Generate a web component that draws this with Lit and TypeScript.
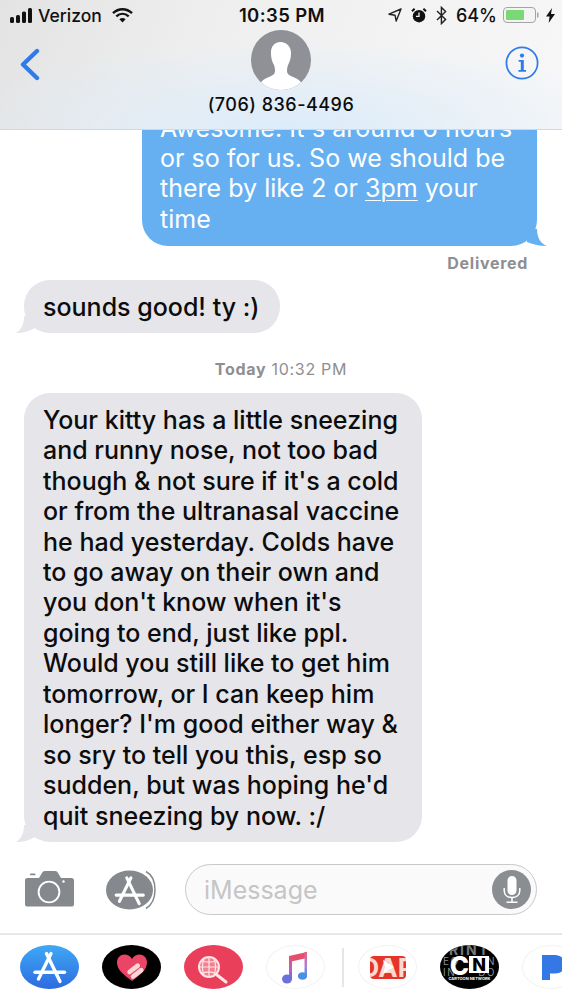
import { html, css, LitElement, svg } from "lit";
import { customElement } from "lit/decorators.js";

const INCOMING = [
  "Your kitty has a little sneezing",
  "and runny nose, not too bad",
  "though & not sure if it's a cold",
  "or from the ultranasal vaccine",
  "he had yesterday. Colds have",
  "to go away on their own and",
  "you don't know when it's",
  "going to end, just like ppl.",
  "Would you still like to get him",
  "tomorrow, or I can keep him",
  "longer? I'm good either way &",
  "so sry to tell you this, esp so",
  "sudden, but was hoping he'd",
  "quit sneezing by now. :/",
];

// drawn on a 59x44 box, the size of the drawer ovals
const storeGlyph = svg`
  <g fill="none" stroke="#fff" stroke-width="3.4" stroke-linecap="round">
    <path d="M31 8.5 L18.5 34" />
    <path d="M26.5 8.5 L40 36.5" />
    <path d="M15 27.3 H44.5" />
  </g>`;

const inTail = html`
  <svg class="tail" width="19" height="17" viewBox="0 0 19 17" fill="#e5e5ea">
    <path d="M8 0 C8 8 6 13 0 17 C7 17 14 15 19 12 V0 Z" />
  </svg>
`;

@customElement("app-root")
export class AppRoot extends LitElement {
  static styles = css`
    :host {
      display: block;
      width: 562px;
      height: 1000px;
      background: #fff;
      font-family: Inter, "Liberation Sans", sans-serif;
      color: #0c0c0c;
      overflow: hidden;
    }
    .page {
      display: flex;
      flex-direction: column;
      height: 1000px;
    }
    svg {
      display: block;
      flex: none;
    }

    header {
      flex: none;
      height: 129px;
      border-bottom: 1px solid #d6d6d8;
      background:
        radial-gradient(ellipse 340px 90px at 52% 100%, #dcecfa 0%, rgba(224, 238, 250, 0) 100%),
        linear-gradient(110deg, #e3e3e3 0%, #efefef 38%, #f7f7f8 100%);
    }
    .status {
      height: 30px;
      display: grid;
      grid-template-columns: 1fr auto 1fr;
      align-items: center;
      font-size: 17.5px;
      font-weight: 500;
      color: #111;
    }
    .status-left {
      display: flex;
      align-items: center;
      padding-left: 10px;
      gap: 5px;
    }
    .status-left svg.wifi {
      margin-left: 5px;
    }
    .time {
      font-weight: 600;
      font-size: 18.5px;
      letter-spacing: 0.4px;
      padding-left: 2px;
    }
    .status-right {
      display: flex;
      align-items: center;
      justify-content: flex-end;
      padding-right: 7px;
      gap: 9px;
    }
    .percent {
      font-size: 18px;
    }
    .battery {
      margin: 0 -2px 0 -3px;
    }
    .nav {
      display: grid;
      grid-template-columns: 1fr auto 1fr;
      align-items: start;
    }
    .back {
      padding: 18px 0 0 20px;
    }
    .info {
      justify-self: end;
      padding: 16px 23px 0 0;
    }
    .contact {
      display: flex;
      flex-direction: column;
      align-items: center;
    }
    .number {
      margin-top: 5px;
      font-size: 18px;
      line-height: 20px;
      font-weight: 500;
      letter-spacing: 0.5px;
    }

    .thread {
      flex: 1;
      min-height: 0;
      overflow: hidden;
      display: flex;
      flex-direction: column;
      align-items: flex-start;
    }
    .bubble {
      position: relative;
      font-size: 25px;
      line-height: 30.46px;
      box-sizing: border-box;
    }
    .out {
      align-self: flex-end;
      margin: -27.5px 25px 0 0;
      width: 395px;
      padding: 10px 18px 11.5px;
      border-radius: 26px;
      background: #66b0f1;
      color: #fff;
      letter-spacing: 0.02px;
    }
    .out u {
      text-decoration-thickness: 1px;
      text-underline-offset: 3px;
    }
    .in {
      margin-left: 24px;
      padding: 12px 23px 11px 19px;
      border-radius: 26px;
      background: #e5e5ea;
      font-weight: 500;
    }
    .tail {
      position: absolute;
      bottom: 0;
    }
    .out .tail {
      right: -10px;
    }
    .in .tail {
      left: -8px;
    }
    .delivered {
      align-self: flex-end;
      margin: 7px 34px 0 0;
      font-size: 16px;
      line-height: 20px;
      font-weight: 700;
      letter-spacing: 0.7px;
      color: #8e8e93;
    }
    .first {
      margin-top: 7.5px;
      padding: 12px 20px 10px 19px;
    }
    .stamp {
      align-self: center;
      margin: 26px 0 14px;
      font-size: 16px;
      line-height: 20px;
      letter-spacing: 0.7px;
      color: #8e8e93;
    }
    .stamp b {
      font-weight: 700;
    }

    .composer {
      flex: none;
      height: 78px;
      box-sizing: border-box;
      padding: 9px 25px 18px;
      display: flex;
      align-items: center;
    }
    .camera {
      margin-right: 32px;
    }
    .store-btn {
      margin-right: 27px;
    }
    .field {
      flex: 1;
      height: 51px;
      box-sizing: border-box;
      border: 1.5px solid #c9c9cb;
      border-radius: 26px;
      background: #fafafa;
      display: flex;
      align-items: center;
      justify-content: space-between;
      padding: 0 5px 0 18px;
      font-size: 25px;
      color: #c5c5c7;
    }
    .mic {
      width: 39px;
      height: 39px;
      border-radius: 50%;
      background: #8a8d91;
      display: flex;
      align-items: center;
      justify-content: center;
    }

    .drawer {
      flex: none;
      height: 67px;
      box-sizing: border-box;
      border-top: 2px solid #e8e8e8;
      padding: 10px 0 0 20px;
      display: flex;
      align-items: flex-start;
      gap: 23px;
      overflow: hidden;
    }
    .oval {
      position: relative;
      flex: none;
      width: 59px;
      height: 44px;
      border-radius: 50%;
      display: flex;
      align-items: center;
      justify-content: center;
      overflow: hidden;
    }
    .store {
      background: linear-gradient(#3fa9f5, #2c6be0);
    }
    .black {
      background: #000;
    }
    .red {
      background: #ea3f5b;
    }
    .plain {
      box-shadow: inset 0 0 0 1px #f2f2f2;
      background: #fff;
    }
    .divider {
      flex: none;
      width: 2px;
      height: 39px;
      margin: 3px -9px 0 -6px;
      background: #e6e6e6;
    }
    .dap {
      width: 36px;
      height: 23px;
      border-radius: 4px;
      background: #e5352b;
      color: #fbd9cf;
      font-size: 26px;
      line-height: 23px;
      font-weight: 700;
      display: flex;
      justify-content: center;
      overflow: hidden;
      white-space: nowrap;
    }
    .play {
      position: absolute;
    }
    .cn-rows {
      position: absolute;
      inset: 0;
      display: flex;
      flex-direction: column;
      color: #8f8f8f;
      white-space: nowrap;
    }
    .cn-top {
      height: 11px;
      font-size: 14px;
      line-height: 10px;
      font-weight: 700;
      letter-spacing: 2px;
      text-align: center;
      color: #777;
      overflow: hidden;
    }
    .cn-row {
      display: flex;
      justify-content: space-between;
      padding: 0 3px;
      height: 11px;
      font-size: 10px;
      line-height: 11px;
      letter-spacing: 1.5px;
    }
    .cn-logo {
      position: relative;
      display: flex;
      align-items: flex-start;
      margin-top: -3px;
      font-weight: 800;
    }
    .cn-c {
      color: #fff;
      font-size: 26px;
      line-height: 22px;
    }
    .cn-n {
      width: 20px;
      height: 17px;
      margin-top: 1px;
      background: #fff;
      color: #000;
      font-size: 18px;
      line-height: 17px;
      text-align: center;
    }
    .cn-sub {
      position: absolute;
      left: 0;
      right: 0;
      bottom: 8px;
      text-align: center;
      font-size: 4px;
      line-height: 5px;
      font-weight: 700;
      color: #fff;
    }
    .pandora {
      justify-content: flex-start;
      padding-left: 20px;
      box-sizing: border-box;
    }
  `;

  render() {
    return html`
      <div class="page">
        <header>
          <div class="status">
            <div class="status-left">
              <svg width="23" height="15" viewBox="0 0 23 15" fill="#111">
                <rect x="0" y="9" width="4" height="6" rx="1.5" />
                <rect x="6" y="7" width="4" height="8" rx="1.5" />
                <rect x="12" y="3.5" width="4" height="11.5" rx="1.5" />
                <rect x="18" y="0" width="4" height="15" rx="1.5" />
              </svg>
              <span>Verizon</span>
              <svg class="wifi" width="21" height="15" viewBox="0 0 21 15" fill="none" stroke="#111" stroke-width="2.4">
                <path d="M1 5.2 C6.5 0 14.5 0 20 5.2" />
                <path d="M4.3 8.4 C8 5 13 5 16.7 8.4" />
                <path d="M10.5 14.5 L7.4 11.2 C9.3 9.7 11.7 9.7 13.6 11.2 Z" fill="#111" stroke="none" />
              </svg>
            </div>
            <div class="time">10:35 PM</div>
            <div class="status-right">
              <svg width="14" height="14" viewBox="0 0 14 14" fill="none" stroke="#222" stroke-width="1.4" stroke-linejoin="round">
                <path d="M13 1 L1 6.2 L7 7.2 L8.2 13 Z" />
              </svg>
              <svg width="16" height="15" viewBox="0 0 16 15">
                <circle cx="8" cy="8.2" r="6.2" fill="#111" />
                <path d="M8 4.4 V8.4 H5" fill="none" stroke="#f2f2f2" stroke-width="1.3" />
                <path d="M1 3.2 L3.6 0.8 M15 3.2 L12.4 0.8" stroke="#111" stroke-width="2" />
              </svg>
              <svg width="11" height="19" viewBox="0 0 11 19" fill="none" stroke="#222" stroke-width="1.4">
                <path d="M1 5 L9.6 13.4 L5.4 17.6 V1.4 L9.6 5.6 L1 14" />
              </svg>
              <span class="percent">64%</span>
              <svg class="battery" width="36" height="16" viewBox="0 0 36 16">
                <rect x="0.5" y="0.5" width="32" height="15" rx="3.5" fill="#f4f4f4" stroke="#a4a4a4" />
                <rect x="3" y="3" width="18" height="10" rx="1" fill="#7bd877" />
                <rect x="34" y="5.5" width="1.5" height="5" fill="#a4a4a4" />
              </svg>
              <svg width="9" height="15" viewBox="0 0 9 15" fill="#111">
                <path d="M6 0 L0 8.5 H3.6 L2.6 15 L9 6 H5 Z" />
              </svg>
            </div>
          </div>
          <div class="nav">
            <div class="back">
              <svg width="20" height="33" viewBox="0 0 20 33" fill="none" stroke="#2f7bea" stroke-width="4.4" stroke-linecap="round" stroke-linejoin="round">
                <path d="M17 3 L3 16.5 L17 30" />
              </svg>
            </div>
            <div class="contact">
              <svg width="60" height="60" viewBox="0 0 60 60">
                <defs>
                  <clipPath id="avc"><circle cx="30" cy="30" r="30" /></clipPath>
                </defs>
                <circle cx="30" cy="30" r="30" fill="#8f9197" />
                <g clip-path="url(#avc)">
                  <path fill="#fff" d="M29.5 12 C23 12 19.5 17 20 24 C20.3 29 21 31 22.5 34 C23.5 36 24 38 24 41 C24 44 22 45.5 18 47 C14 48.5 10 51 8 55 V60 H52 V55 C50 51 46 48.5 42 47 C38 45.5 36 44 36 41 C36 38 36.5 36 37.5 34 C39 31 39.7 29 40 24 C40.5 17 36 12 29.5 12 Z" />
                </g>
              </svg>
              <div class="number">(706) 836-4496</div>
            </div>
            <div class="info">
              <svg width="34" height="34" viewBox="0 0 34 34" fill="none">
                <circle cx="17" cy="17" r="15.6" stroke="#2f7bea" stroke-width="1.7" />
                <circle cx="17" cy="9.6" r="2.1" fill="#2f7bea" />
                <path d="M13.6 14 H18.8 V24 H21 V25.8 H13.4 V24 H15.8 V15.8 H13.6 Z" fill="#2f7bea" />
              </svg>
            </div>
          </div>
        </header>

        <div class="thread">
          <div class="bubble out">
            Awesome. It's around 6 hours<br />
            or so for us. So we should be<br />
            there by like 2 or <u>3pm</u> your<br />
            time
            <svg class="tail" width="25" height="17" viewBox="0 0 25 17" fill="#66b0f1">
              <path d="M15 0 C15 8 18 14 24.7 17 C17 17 10 15 5 13 V0 Z" />
            </svg>
          </div>
          <div class="delivered">Delivered</div>

          <div class="bubble in first">sounds good! ty :) ${inTail}</div>

          <div class="stamp"><b>Today</b> 10:32 PM</div>

          <div class="bubble in">
            ${INCOMING.map((line) => html`${line}<br />`)} ${inTail}
          </div>
        </div>

        <div class="composer">
          <svg class="camera" width="49" height="37" viewBox="0 0 49 37">
            <path fill="#85888c" d="M2.5 7 H14 L17 2 C17.5 0.8 18.5 0 20 0 H30 C31.5 0 32.5 0.8 33 2 L36 7 H46.5 C48 7 49 8 49 9.5 V33 C49 34.8 48 35.6 46.5 35.6 H2.5 C1 35.6 0 34.8 0 33 V9.5 C0 8 1 7 2.5 7 Z" />
            <rect x="5" y="2.5" width="5.5" height="1.8" rx="0.9" fill="#85888c" />
            <circle cx="24" cy="21" r="10.4" fill="none" stroke="#fff" stroke-width="1.9" />
            <circle cx="38.5" cy="10.5" r="1.2" fill="#fff" />
          </svg>
          <svg class="store-btn" width="52" height="40" viewBox="0 0 52 40">
            <ellipse cx="23.5" cy="20" rx="23.5" ry="19.5" fill="#85888c" />
            <path d="M40 1.5 C52 8 52 31 40 38.5" fill="none" stroke="#85888c" stroke-width="1.5" />
            <g transform="translate(-3.6 0) scale(0.92)">${storeGlyph}</g>
          </svg>
          <div class="field">
            <span>iMessage</span>
            <div class="mic">
              <svg width="18" height="27" viewBox="0 0 18 27" fill="none" stroke="#fff" stroke-width="1.5">
                <rect x="4.5" y="0" width="9" height="19" rx="4.5" fill="#fff" stroke="none" />
                <path d="M1.2 12 V14.5 C1.2 19 4.6 21.6 9 21.6 C13.4 21.6 16.8 19 16.8 14.5 V12" />
                <path d="M9 21.6 V26 M3.5 26.2 H14.5" />
              </svg>
            </div>
          </div>
        </div>

        <div class="drawer">
          <div class="oval store">
            <svg width="59" height="44" viewBox="0 0 59 44">${storeGlyph}</svg>
          </div>
          <div class="oval black">
            <svg width="32" height="27" viewBox="0 0 32 27">
              <path fill="#ea4467" d="M16 27 C9 21.5 1 16.5 1 8.5 C1 3.5 4.5 0.5 8.5 0.5 C11.5 0.5 14.5 2 16 5 C17.5 2 20.5 0.5 23.5 0.5 C27.5 0.5 31 3.5 31 8.5 C31 16.5 23 21.5 16 27 Z" />
              <g transform="rotate(-38 20 17)">
                <rect x="12" y="11.5" width="15" height="4.6" rx="2.3" fill="#fbd8d8" />
                <rect x="12" y="17.2" width="15" height="4.6" rx="2.3" fill="#fbd8d8" />
              </g>
            </svg>
          </div>
          <div class="oval red">
            <svg width="59" height="44" viewBox="0 0 59 44" fill="none" stroke="#fde4e6">
              <circle cx="25" cy="22" r="10" fill="#f3808f" stroke-width="2" />
              <path d="M25 12 V32 M15 22 H35 M17.5 15.5 C22 17.5 28 17.5 32.5 15.5 M17.5 28.5 C22 26.5 28 26.5 32.5 28.5 M20 13.5 C18 19 18 25 20 30.5 M30 13.5 C32 19 32 25 30 30.5" stroke-width="1.2" />
              <path d="M33 30 L42 37" stroke-width="3" stroke-linecap="round" />
            </svg>
          </div>
          <div class="oval plain">
            <svg width="59" height="44" viewBox="0 0 59 44" fill="none">
              <defs>
                <linearGradient id="noteA" x1="0" y1="0" x2="0" y2="1">
                  <stop offset="0" stop-color="#e9506f" />
                  <stop offset="0.6" stop-color="#b365c4" />
                  <stop offset="1" stop-color="#6d6fdc" />
                </linearGradient>
                <linearGradient id="noteB" x1="0" y1="0" x2="0" y2="1">
                  <stop offset="0" stop-color="#ee5f7b" />
                  <stop offset="0.6" stop-color="#a884d8" />
                  <stop offset="1" stop-color="#4a8fe6" />
                </linearGradient>
              </defs>
              <path d="M23 11 L41 7 V13 L23 17 Z" fill="#e5506e" />
              <rect x="23" y="11" width="3" height="23" fill="url(#noteA)" />
              <rect x="38.5" y="7" width="2.5" height="24" fill="url(#noteB)" />
              <ellipse cx="21" cy="34" rx="5" ry="4.5" fill="#6d6fdc" />
              <ellipse cx="36.5" cy="31" rx="4.6" ry="3.8" fill="#4a8fe6" />
            </svg>
          </div>
          <div class="divider"></div>
          <div class="oval plain">
            <div class="dap"><span>DAP</span></div>
            <svg class="play" width="14" height="16" viewBox="0 0 14 16">
              <path d="M2 1 L13 8 L2 15 L4 8 Z" fill="#fff" />
            </svg>
          </div>
          <div class="oval black">
            <div class="cn-rows">
              <div class="cn-top">RINT</div>
              <div class="cn-row"><span>EO</span><span>VN</span></div>
              <div class="cn-row"><span>IN</span><span>DO</span></div>
            </div>
            <div class="cn-logo">
              <span class="cn-c">C</span><span class="cn-n">N</span>
            </div>
            <div class="cn-sub">CARTOON NETWORK</div>
          </div>
          <div class="oval plain pandora">
            <svg width="24" height="25" viewBox="0 0 24 25">
              <path fill="#3478e5" d="M0 0 H13 C19 0 23 4 23 9.5 C23 15 19 18.5 13 18.5 H8 V25 H0 Z" />
            </svg>
          </div>
        </div>
      </div>
    `;
  }
}

declare global {
  interface HTMLElementTagNameMap {
    "app-root": AppRoot;
  }
}
